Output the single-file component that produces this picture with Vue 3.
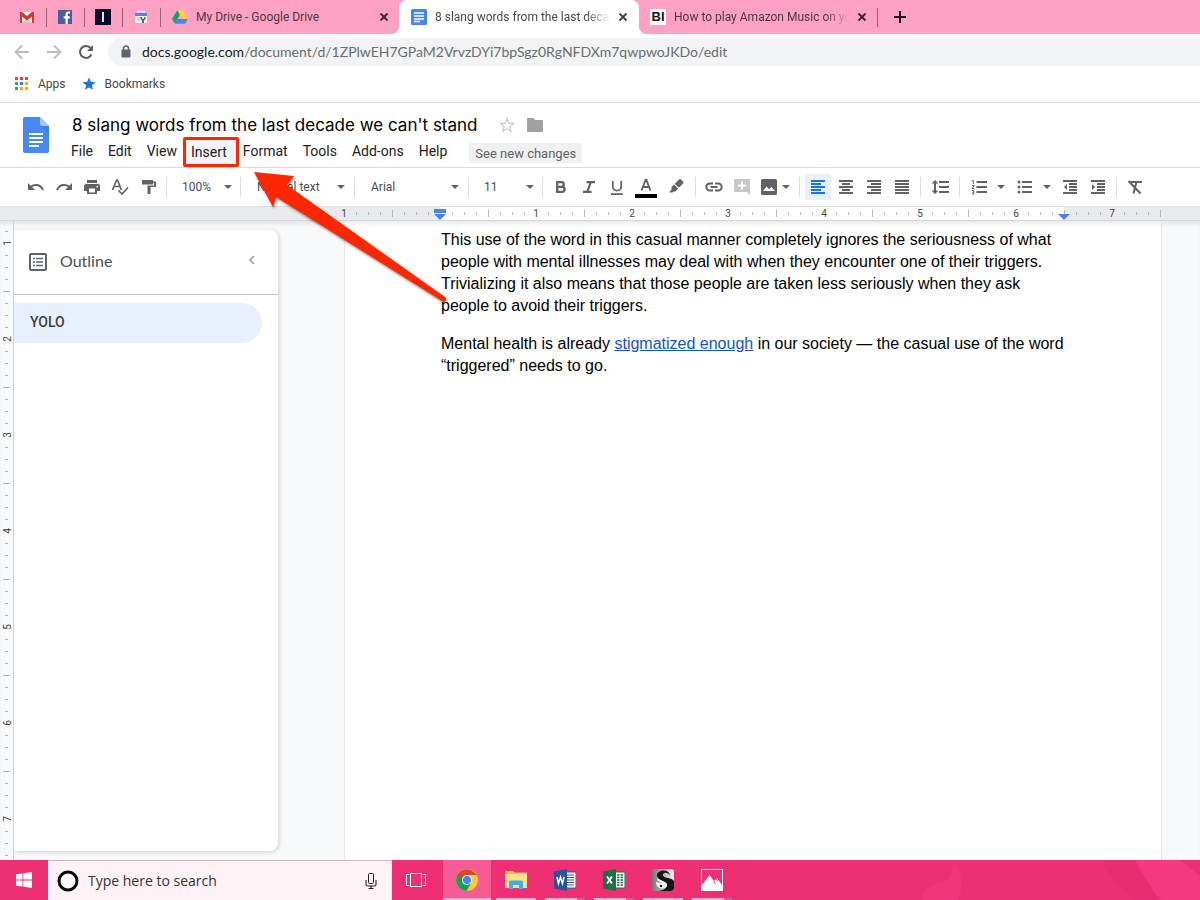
<script setup>
const outline = ['YOLO']
const menus = ['File', 'Edit', 'View', 'Insert', 'Format', 'Tools', 'Add-ons', 'Help']

const hTicks = []
for (let x = 12; x < 816; x += 12) {
  if (x === 96) continue
  if ((x - 96) % 96 === 0) hTicks.push({ x, label: (x - 96) / 96 })
  else hTicks.push({ x, tall: x % 48 === 0 })
}

const vTicks = []
for (let y = 10; y < 640; y += 12) {
  if ((y - 22) % 96 === 0) vTicks.push({ y, label: (y - 22) / 96 + 1 })
  else vTicks.push({ y, tall: (y - 22) % 48 === 0 })
}

const bars = {
  left: [14, 10, 14, 10, 14].map((w, i) => ({ x: 0, w, y: i * 3 })),
  center: [14, 8, 14, 8, 14].map((w, i) => ({ x: (14 - w) / 2, w, y: i * 3 })),
  right: [14, 10, 14, 10, 14].map((w, i) => ({ x: 14 - w, w, y: i * 3 })),
  justify: [14, 14, 14, 14, 14].map((w, i) => ({ x: 0, w, y: i * 3 })),
}
const aligns = ['left', 'center', 'right', 'justify']
</script>

<template>
  <div class="screen">
    <header class="tabs">
      <button class="pin" aria-label="Gmail">
        <svg width="16" height="16" viewBox="0 0 16 16"><path fill="#f5f0ee" d="M1 3h14v11H1z" /><path fill="#d9c9c6" d="M3 14l5-5 5 5z" /><path fill="#d8382b" d="M1 14V3.500L8 9l7-5.500V14h-2V7.500L8 11.500 3 7.500V14z" /><path fill="#d8382b" d="M1 3h2l5 4 5-4h2v2L8 10 1 5z" /></svg>
      </button>
      <button class="pin" aria-label="Facebook">
        <svg width="16" height="16" viewBox="0 0 16 16"><rect x="1" y="1" width="14" height="14" fill="#4460a0" /><path fill="#fff" d="M8.500 15V9.500H6.700V7.200h1.800V5.500c0-2 1.200-3 3-3l1.600.1v2h-1.200c-.9 0-1.100.5-1.100 1.100v1.500h2.200l-.3 2.300h-1.900V15z" /></svg>
      </button>
      <button class="pin" aria-label="Insider">
        <svg width="16" height="16" viewBox="0 0 16 16"><rect width="16" height="16" fill="#050c2b" /><rect x="7" y="3" width="2" height="10" fill="#e3e6df" /></svg>
      </button>
      <button class="pin" aria-label="Work tools">
        <svg width="16" height="16" viewBox="0 0 16 16"><path d="M5 5V2.500h6V5" fill="none" stroke="#e9eef3" stroke-width="1.500" /><rect x="2" y="4" width="12" height="10" rx="1" fill="#eef1f4" /><rect x="2" y="4" width="12" height="3" fill="#3f8fdc" /><path d="M4 9h3M4 11h3" stroke="#a9b6c2" /><path d="M7.500 8v2l1.800 1.500V14h1.600v-2.500L12.500 10V8h-1.300v1.700H9V8z" fill="#4d5560" /></svg>
      </button>
      <div class="tab drive">
        <svg width="16" height="16" viewBox="0 0 16 16"><path fill="#1aa15f" d="M5.300 1L0 10l2.700 4.700L8 5.600z" /><path fill="#ffcf48" d="M5.300 1h5.400L16 10h-5.400z" /><path fill="#4587f4" d="M5.400 10H16l-2.700 4.700H2.700z" /></svg>
        <span class="tab-title">My Drive - Google Drive</span>
        <button class="close" aria-label="Close tab"><svg width="10" height="10" viewBox="0 0 10 10"><path d="M1.500 1.500l7 7M8.500 1.500l-7 7" stroke="#332229" stroke-width="1.800" /></svg></button>
      </div>
      <div class="tab active">
        <svg width="16" height="16" viewBox="0 0 16 16"><rect width="16" height="16" rx="1.500" fill="#4486f5" /><path d="M3 4h10M3 7h10M3 10h10M3 12.500h6" stroke="#fff" stroke-width="1.500" /></svg>
        <span class="tab-title fade">8 slang words from the last decade</span>
        <button class="close" aria-label="Close tab"><svg width="10" height="10" viewBox="0 0 10 10"><path d="M1.500 1.500l7 7M8.500 1.500l-7 7" stroke="#3c4043" stroke-width="1.800" /></svg></button>
      </div>
      <div class="tab music">
        <span class="bi">BI</span>
        <span class="tab-title fade">How to play Amazon Music on your</span>
        <button class="close" aria-label="Close tab"><svg width="10" height="10" viewBox="0 0 10 10"><path d="M1.500 1.500l7 7M8.500 1.500l-7 7" stroke="#332229" stroke-width="1.800" /></svg></button>
      </div>
      <button class="newtab" aria-label="New tab"><svg width="12" height="12" viewBox="0 0 12 12"><path d="M6 0v12M0 6h12" stroke="#1d1418" stroke-width="2" /></svg></button>
    </header>

    <div class="nav">
      <button class="navbtn" aria-label="Back"><svg width="16" height="16" viewBox="0 0 16 16"><path d="M15 8H2M8 1.500L1.500 8 8 14.500" fill="none" stroke="#b9bbbd" stroke-width="1.800" /></svg></button>
      <button class="navbtn" aria-label="Forward"><svg width="16" height="16" viewBox="0 0 16 16"><path d="M1 8h13M8 1.500L14.500 8 8 14.500" fill="none" stroke="#b9bbbd" stroke-width="1.800" /></svg></button>
      <button class="navbtn" aria-label="Reload"><svg width="16" height="16" viewBox="0 0 16 16"><path d="M13.500 10.500A6 6 0 1 1 12.600 4" fill="none" stroke="#5a5d61" stroke-width="2" /><path d="M15 1v6H9z" fill="#5a5d61" /></svg></button>
      <div class="address">
        <svg width="10" height="13" viewBox="0 0 10 13"><path d="M2.500 5V3.500a2.500 2.500 0 0 1 5 0V5" fill="none" stroke="#5f6368" stroke-width="1.500" /><rect x="0.500" y="4.500" width="9" height="8" rx="1" fill="#5f6368" /></svg>
        <span class="url"><b>docs.google.com</b>/document/d/1ZPlwEH7GPaM2VrvzDYi7bpSgz0RgNFDXm7qwpwoJKDo/edit</span>
      </div>
    </div>

    <nav class="bookmarks">
      <a href="#"><svg width="14" height="14" viewBox="0 0 14 14"><path fill="#ea4335" d="M0 0h3v3H0zM5 0h3v3H5zM10 0h3v3h-3z" /><path fill="#34a853" d="M0 5h3v3H0zM0 10h3v3H0z" /><path fill="#1a8cf0" d="M5 5h3v3H5z" /><path fill="#fbab05" d="M10 5h3v3h-3zM5 10h3v3H5zM10 10h3v3h-3z" /></svg><span>Apps</span></a>
      <a href="#"><svg width="14" height="14" viewBox="0 0 14 14"><path fill="#1a73e8" d="M7 .5l1.800 4.300 4.700.4-3.600 3 1.100 4.600L7 10.400l-4 2.400 1.100-4.600-3.600-3 4.700-.4z" /></svg><span>Bookmarks</span></a>
    </nav>

    <div class="dochead">
      <svg class="doclogo" width="26" height="36" viewBox="0 0 26 36"><path fill="#4688f4" d="M2 0h15l9 9v25a2 2 0 0 1-2 2H2a2 2 0 0 1-2-2V2a2 2 0 0 1 2-2z" /><path fill="#3a74dc" d="M18 9h8v8z" opacity=".6" /><path fill="#a6c5fa" d="M17 0l9 9h-7a2 2 0 0 1-2-2z" /><path d="M6 17h14M6 21h14M6 25h14M6 29h10" stroke="#fff" stroke-width="2" /></svg>
      <div class="headcol">
        <div class="titlerow">
          <h1>8 slang words from the last decade we can't stand</h1>
          <button aria-label="Star"><svg width="16" height="16" viewBox="0 0 16 16"><path fill="none" stroke="#c6c7c9" stroke-width="1.100" d="M8 1.500l1.800 4.600 4.800.3-3.700 3.100 1.200 4.800L8 11.600l-4.100 2.700 1.200-4.800L1.400 6.400l4.800-.3z" /></svg></button>
          <button aria-label="Move"><svg width="16" height="14" viewBox="0 0 16 14"><path fill="#9fa1a4" d="M1 0h5.500l2 2H15a1 1 0 0 1 1 1v10a1 1 0 0 1-1 1H1a1 1 0 0 1-1-1V1a1 1 0 0 1 1-1z" /></svg></button>
        </div>
        <div class="menus">
          <button v-for="m in menus" :key="m" :class="{ marked: m === 'Insert' }">{{ m }}</button>
          <button class="changes">See new changes</button>
        </div>
      </div>
    </div>

    <div class="tools">
      <button class="t" aria-label="Undo"><svg width="18" height="18" viewBox="0 0 18 18"><path d="M3 9.500C6.500 5.500 13.500 6 16 12" fill="none" stroke="#5f6368" stroke-width="2" /><path d="M1 5v7h7z" fill="#5f6368" /></svg></button>
      <button class="t" aria-label="Redo"><svg width="18" height="18" viewBox="0 0 18 18"><path d="M15 9.500C11.500 5.500 4.500 6 2 12" fill="none" stroke="#5f6368" stroke-width="2" /><path d="M17 5v7h-7z" fill="#5f6368" /></svg></button>
      <button class="t" aria-label="Print"><svg width="18" height="18" viewBox="0 0 18 18"><path fill="#5f6368" fill-rule="evenodd" d="M4 2h10v3H4zM3 6h12a2 2 0 0 1 2 2v5h-3v3H4v-3H1V8a2 2 0 0 1 2-2zM6 10.500v4h6v-4zM13.500 8v1.500H15V8z" /></svg></button>
      <button class="t" aria-label="Spelling"><svg width="18" height="18" viewBox="0 0 18 18"><path d="M1.500 12L5.600 2h.8l4 10M3 8.500h6" fill="none" stroke="#5f6368" stroke-width="1.700" /><path d="M7.500 12.500l3.500 3.500 6-6.500" fill="none" stroke="#5f6368" stroke-width="1.700" /></svg></button>
      <button class="t" aria-label="Paint format"><svg width="18" height="18" viewBox="0 0 18 18"><path fill="#5f6368" d="M3 2h11v1.500h3V9h-5.500v7h-3V7.500H15V5h-1v1.500H3z" /></svg></button>
      <i class="sep" />
      <label class="drop narrow"><select aria-label="Zoom"><option>100%</option></select><svg width="8" height="4"><path d="M0 0h8l-4 4z" fill="#5f6368" /></svg></label>
      <i class="bar" />
      <label class="drop"><select aria-label="Style"><option>Normal text</option></select><svg width="8" height="4"><path d="M0 0h8l-4 4z" fill="#5f6368" /></svg></label>
      <i class="bar" />
      <label class="drop"><select aria-label="Font"><option>Arial</option></select><svg width="8" height="4"><path d="M0 0h8l-4 4z" fill="#5f6368" /></svg></label>
      <i class="bar" />
      <label class="drop narrow"><select aria-label="Font size"><option>11</option></select><svg width="8" height="4"><path d="M0 0h8l-4 4z" fill="#5f6368" /></svg></label>
      <i class="sep first" />
      <button class="t" aria-label="Bold"><svg width="18" height="18" viewBox="0 0 18 18"><path d="M5.200 4.200h4.300a2.300 2.300 0 0 1 0 4.600H5.200zM5.200 8.800h4.900a2.500 2.500 0 0 1 0 5H5.200z" fill="none" stroke="#5f6368" stroke-width="2.300" /></svg></button>
      <button class="t" aria-label="Italic"><svg width="18" height="18" viewBox="0 0 18 18"><path d="M6.500 4.200H15M3 13.800h8.500M10.800 4L7.200 14" fill="none" stroke="#5f6368" stroke-width="2.200" /></svg></button>
      <button class="t" aria-label="Underline"><svg width="18" height="18" viewBox="0 0 18 18"><path d="M4.800 3v5.500a4.200 4.200 0 0 0 8.400 0V3M3 16.200h12" fill="none" stroke="#5f6368" stroke-width="1.800" /></svg></button>
      <button class="t wide" aria-label="Text color"><svg width="22" height="22" viewBox="0 0 22 22"><path d="M6.500 14.500L10.600 4h.8l4.100 10.500M8 11h6" fill="none" stroke="#5f6368" stroke-width="1.900" /><path fill="#000" d="M0 18h22v4H0z" /></svg></button>
      <button class="t wide" aria-label="Highlight"><svg width="18" height="18" viewBox="0 0 18 18"><path fill="#5f6368" d="M12 1.500a1.500 1.500 0 0 1 2.100 0l1.900 1.900a1.500 1.500 0 0 1 0 2.100l-4.200 4.200-4-4zM7 6.500l4.200 4.200-2.700 2.700H6.500L5.500 14.500H2l2.500-2.800V9z" /></svg></button>
      <i class="sep" />
      <button class="t" aria-label="Link"><svg width="20" height="18" viewBox="0 0 20 18"><path d="M9 5.500H5.800a3.500 3.500 0 0 0 0 7H9M11 5.500h3.200a3.500 3.500 0 0 1 0 7H11M6.500 9h7" fill="none" stroke="#5f6368" stroke-width="2" /></svg></button>
      <button class="t" aria-label="Comment"><svg width="18" height="18" viewBox="0 0 18 18"><path fill="#c6c7c9" d="M2 1h14a1 1 0 0 1 1 1v15l-3-3H2a1 1 0 0 1-1-1V2a1 1 0 0 1 1-1z" /><path d="M9 3.500v8M5 7.500h8" stroke="#fff" stroke-width="2" /></svg></button>
      <button class="t pair image" aria-label="Image"><svg width="16" height="16" viewBox="0 0 16 16"><rect width="16" height="16" rx="1.500" fill="#5f6368" /><path fill="#fff" d="M2 12l3.500-4.500L8 10.300l2.500-2.300 3.500 4z" /></svg><svg width="8" height="4"><path d="M0 0h8l-4 4z" fill="#5f6368" /></svg></button>
      <i class="sep" />
      <button v-for="a in aligns" :key="a" class="t align" :class="{ on: a === 'left' }" :aria-label="'Align ' + a"><svg width="14" height="14" viewBox="0 0 14 14"><rect v-for="b in bars[a]" :key="b.y" :x="b.x" :y="b.y" :width="b.w" height="2" :fill="a === 'left' ? '#1a73e8' : '#5f6368'" /></svg></button>
      <i class="sep" />
      <button class="t wide" aria-label="Line spacing"><svg width="18" height="18" viewBox="0 0 18 18"><path fill="#5f6368" d="M4 2l3.500 3.500H5v7h2.500L4 16 .5 12.500H3v-7H.5zM8 3h10v2H8zM8 8h10v2H8zM8 13h10v2H8z" /></svg></button>
      <i class="sep" />
      <button class="t pair" aria-label="Numbered list"><svg width="16" height="16" viewBox="0 0 16 16"><path fill="#5f6368" d="M5.500 2H16v2H5.500zM5.500 7H16v2H5.500zM5.500 12H16v2H5.500z" /><path d="M1 1.500h1.300V5M.8 6.500h2.400L1 9.500h2.400M.8 11.500h2v3.500h-2M1.500 13.200h1.300" fill="none" stroke="#5f6368" stroke-width="1" /></svg><svg width="8" height="4"><path d="M0 0h8l-4 4z" fill="#5f6368" /></svg></button>
      <button class="t pair" aria-label="Bulleted list"><svg width="16" height="16" viewBox="0 0 16 16"><path fill="#5f6368" d="M5 2h10v2H5zM5 7h10v2H5zM5 12h10v2H5z" /><circle cx="2" cy="3" r="1.500" fill="#5f6368" /><circle cx="2" cy="8" r="1.500" fill="#5f6368" /><circle cx="2" cy="13" r="1.500" fill="#5f6368" /></svg><svg width="8" height="4"><path d="M0 0h8l-4 4z" fill="#5f6368" /></svg></button>
      <button class="t" aria-label="Decrease indent"><svg width="14" height="14" viewBox="0 0 14 14"><path fill="#5f6368" d="M0 0h14v2H0zM6 3h8v2H6zM6 6h8v2H6zM6 9h8v2H6zM0 12h14v2H0zM4 4v6L1 7z" /></svg></button>
      <button class="t" aria-label="Increase indent"><svg width="14" height="14" viewBox="0 0 14 14"><path fill="#5f6368" d="M0 0h14v2H0zM6 3h8v2H6zM6 6h8v2H6zM6 9h8v2H6zM0 12h14v2H0zM1 4v6l3-3z" /></svg></button>
      <i class="sep" />
      <button class="t" aria-label="Clear formatting"><svg width="18" height="18" viewBox="0 0 18 18"><path d="M4.500 4H16M10.500 4L7.500 15.500M2.500 3l12 12.500" fill="none" stroke="#5f6368" stroke-width="2" /></svg></button>
    </div>

    <div class="hruler">
      <svg width="818" height="13" viewBox="0 0 818 13">
        <rect x="96" width="624" height="13" fill="#fff" />
        <text x="0" y="10" text-anchor="middle">1</text>
        <template v-for="t in hTicks" :key="t.x">
          <text v-if="t.label" :x="t.x" y="10" text-anchor="middle">{{ t.label }}</text>
          <rect v-else :x="t.x" :y="t.tall ? 3 : 5" width="1" :height="t.tall ? 7 : 3" fill="#b4b6b9" />
        </template>
        <rect x="816" y="3" width="1" height="7" fill="#b4b6b9" />
        <path d="M90 2h12v4H90zM90 7h12l-6 6z" fill="#4285f4" />
        <path d="M714 7h12l-6 6z" fill="#4285f4" />
      </svg>
    </div>

    <div class="work">
      <div class="vruler">
        <svg width="13" height="639" viewBox="0 0 13 639">
          <template v-for="t in vTicks" :key="t.y">
            <text v-if="t.label" :transform="`rotate(-90 11 ${t.y})`" x="11" :y="t.y" text-anchor="middle">{{ t.label }}</text>
            <rect v-else :x="t.tall ? 3 : 5" :y="t.y" :width="t.tall ? 7 : 3" height="1" fill="#b4b6b9" />
          </template>
        </svg>
      </div>
      <aside class="outline">
        <div class="ohead">
          <svg width="18" height="18" viewBox="0 0 18 18"><rect x="1" y="1" width="16" height="16" rx="1" fill="none" stroke="#5f6368" stroke-width="2" /><path d="M7 5.500h7M7 9h7M7 12.500h7M4 5.500h2M4 9h2M4 12.500h2" stroke="#5f6368" stroke-width="1.500" /></svg>
          <h2>Outline</h2>
          <button aria-label="Close outline"><svg width="8" height="10" viewBox="0 0 8 10"><path d="M6 1L2 5l4 4" fill="none" stroke="#9fa1a4" stroke-width="1.700" /></svg></button>
        </div>
        <a v-for="o in outline" :key="o" href="#" class="oitem">{{ o }}</a>
      </aside>
      <main class="canvas">
        <article class="page">
          <p>This use of the word in this casual manner completely ignores the seriousness of what<br>people with mental illnesses may deal with when they encounter one of their triggers.<br>Trivializing it also means that those people are taken less seriously when they ask<br>people to avoid their triggers.</p>
          <p>Mental health is already <a href="#">stigmatized enough</a> in our society — the casual use of the word<br>“triggered” needs to go.</p>
        </article>
      </main>
    </div>

    <footer class="taskbar">
      <button class="start" aria-label="Start"><svg width="16" height="16" viewBox="0 0 16 16"><path fill="#fff" d="M0 2.300L6.500 1.400v6.200H0zM7.300 1.300L16 0v7.600H7.300zM0 8.400h6.500v6.200L0 13.700zM7.300 8.400H16V16l-8.700-1.300z" /></svg></button>
      <label class="search">
        <svg width="22" height="22" viewBox="0 0 22 22"><circle cx="11" cy="11" r="9" fill="#fff" stroke="#080808" stroke-width="3" /></svg>
        <input type="text" placeholder="Type here to search" aria-label="Type here to search">
        <svg width="12" height="16" viewBox="0 0 12 16"><rect x="3.500" y="0.500" width="5" height="10" rx="1" fill="none" stroke="#222" /><path d="M1 7v4.500a1.500 1.500 0 0 0 1.500 1.500h7a1.500 1.500 0 0 0 1.500-1.500V7M6 13v2.500M3.500 15.500h5" fill="none" stroke="#222" stroke-width="1.100" /></svg>
      </label>
      <button class="app view" aria-label="Task view"><svg width="20" height="14" viewBox="0 0 20 14"><rect x="4.500" y="0.500" width="11" height="13" fill="none" stroke="#fff" /><path d="M3 1.500H.5v11H3M17 1.500h2.500v11H17" fill="none" stroke="#fff" /></svg></button>
      <button class="app current" aria-label="Chrome"><svg width="22" height="22" viewBox="0 0 22 22"><circle cx="11" cy="11" r="11" fill="#fbc934" /><path fill="#1b9e58" d="M1.500 5.500A11 11 0 0 0 10.500 22l5-8.500L11 11z" /><path fill="#d9472f" d="M1.500 5.500A11 11 0 0 1 20.500 6H11L6.500 13.500z" /><path fill="#1b9e58" d="M1.500 5.500l5 8.500 3-1z" /><circle cx="11" cy="11" r="5" fill="#fff" /><circle cx="11" cy="11" r="4" fill="#4285f4" /></svg></button>
      <button class="app run" aria-label="File Explorer"><svg width="22" height="18" viewBox="0 0 22 18"><path fill="#f0c04a" d="M0 0h8l1.500 1.500H22V4H0z" /><path fill="#fbe08c" d="M0 3h22v14H0z" /><path fill="#36b2e6" d="M4 18v-7a1.500 1.500 0 0 1 1.500-1.500h11A1.500 1.500 0 0 1 18 11v7h-4v-4H8v4z" /></svg></button>
      <button class="app run many" aria-label="Word"><svg width="22" height="22" viewBox="0 0 22 22"><rect x="12" y="3" width="10" height="16" fill="#fff" stroke="#2a5699" /><path d="M13 6h7M13 8.500h7M13 11h7M13 13.500h7M13 16h7" stroke="#2a5699" /><path fill="#2a5699" d="M0 2.500L13 0v22L0 19.500z" /><path d="M3 8l1.500 6.500L6.500 8l2 6.500L10 8" fill="none" stroke="#fff" stroke-width="1.500" /></svg></button>
      <button class="app run many" aria-label="Excel"><svg width="22" height="22" viewBox="0 0 22 22"><rect x="12" y="3" width="10" height="16" fill="#fff" stroke="#1e7145" /><path d="M14 6h2.500M14 8.500h2.500M14 11h2.500M14 13.500h2.500M14 16h2.500M17.500 6H20M17.500 8.500H20M17.500 11H20M17.500 13.500H20M17.500 16H20" stroke="#1e7145" stroke-width="1.400" /><path fill="#1e7145" d="M0 2.500L13 0v22L0 19.500z" /><path d="M4 7.500l5 7M9 7.500l-5 7" stroke="#fff" stroke-width="1.900" /></svg></button>
      <button class="app run" aria-label="Scrivener"><svg width="22" height="22" viewBox="0 0 22 22"><defs><linearGradient id="silver" x1="0" y1="0" x2="1" y2="0"><stop offset="0" stop-color="#777" /><stop offset="1" stop-color="#f2f2f2" /></linearGradient></defs><rect width="22" height="22" rx="3" fill="url(#silver)" /><path fill="#161616" d="M22 12v7a3 3 0 0 1-3 3H7c5-1 8-3 8-6 0-4.500-10-4-10-9.500C5 3 8.500 1.500 12 1.500c3 0 5.500 1.500 6 5-1.500-2.300-3.500-3-5.500-2.500-2.200.6-2.200 2.700-.5 3.800C14.500 9.500 20 9 22 12z" /><path fill="#f2f2f2" d="M4 13c0 4 2.500 6.500 6 6.500 3 0 5-1.500 5-4 0-3.500-8-3.500-9.500-7C4.500 13 8 12 10 14c-2.500-.5-4.500 0-6-1z" /><circle cx="9" cy="17" r="1.200" fill="#111" /></svg></button>
      <button class="app run many" aria-label="Photos"><svg width="22" height="22" viewBox="0 0 22 22"><rect x="0.500" y="0.500" width="21" height="21" fill="none" stroke="#fff" /><path fill="#fff" d="M1 16l7.500-10L13 12l3-3 5 7v5H1z" /><path d="M12.500 12l2 2.500M15 9.500l2 3" stroke="#ee2f74" /></svg></button>
      <svg class="waves" viewBox="0 0 460 40" preserveAspectRatio="none"><path d="M180 40q0-14 18-18 14-2 12-20 16 12 6 38z" fill="#ff4585" opacity=".25" /><path d="M360 0q10 22 36 40h30L400 0z" fill="#dc2168" opacity=".2" /><path d="M395 0q10 22 25 40h40V16L440 0z" fill="#ff3f85" opacity=".6" /></svg>
    </footer>

    <svg class="arrow" width="210" height="150" viewBox="0 0 210 150"><path d="M14 12L54 16 47 25 205 137a2 2 0 0 1-3 4L36 37 33 47z" fill="#ff2600" /></svg>
  </div>
</template>

<style>
body { background: #fff; }
html, body { overflow: hidden; }
</style>

<style scoped>
* { box-sizing: border-box; }
.screen { position: relative; display: flex; flex-direction: column; height: 100vh; min-height: 600px; font-family: Roboto, "Liberation Sans", sans-serif; color: #202124; overflow: hidden; background: #fff; }
button { border: 0; background: none; padding: 0; margin: 0; font: inherit; color: inherit; }
svg { display: block; flex: none; }
a { color: inherit; text-decoration: none; }

.tabs { display: flex; height: 34px; background: #ffa1c3; padding-left: 8px; font: 12px Roboto, sans-serif; flex: none; }
.pin { width: 38px; display: flex; justify-content: center; align-items: center; position: relative; }
.pin::after, .music::after { content: ""; position: absolute; right: -1px; top: 8px; width: 1px; height: 19px; background: #8f6475; }
.tab { display: flex; align-items: center; position: relative; }
.tab-title { flex: 1; margin-left: 8px; white-space: nowrap; overflow: hidden; color: #4a3a42; }
.fade { -webkit-mask-image: linear-gradient(90deg, #000 calc(100% - 24px), transparent); mask-image: linear-gradient(90deg, #000 calc(100% - 24px), transparent); }
.close { width: 10px; height: 10px; margin-left: 8px; }
.drive { width: 239px; padding: 0 10px 0 12px; }
.active { width: 240px; background: #fff; border-radius: 8px 8px 0 0; padding: 0 11px 0 12px; }
.active .tab-title { color: #45494d; }
.active::before, .active::after { content: ""; position: absolute; bottom: 0; width: 8px; height: 8px; }
.active::before { left: -8px; background: radial-gradient(circle at 0 0, #ffa1c3 8px, #fff 8px); }
.active::after { right: -8px; background: radial-gradient(circle at 100% 0, #ffa1c3 8px, #fff 8px); }
.music { width: 238px; padding: 0 10px 0 11px; }
.bi { width: 16px; height: 16px; background: #fff; color: #111; font: bold 13px/16px "Liberation Sans", sans-serif; text-align: center; }
.newtab { width: 46px; display: flex; align-items: center; justify-content: center; }

.nav { display: flex; align-items: center; height: 35px; padding-left: 8px; flex: none; }
.navbtn { width: 28px; height: 28px; margin-right: 4px; display: flex; align-items: center; justify-content: center; }
.address { flex: 1; margin-left: 4px; height: 28px; background: #f1f3f4; border-radius: 14px 0 0 14px; display: flex; align-items: center; padding-left: 13px; }
.url { margin-left: 11px; font: 14px Lato, sans-serif; color: #696d71; white-space: nowrap; }
.url b { font-weight: 400; color: #202124; }
.bookmarks { display: flex; gap: 16px; height: 34px; padding: 0 0 4px 15px; align-items: center; border-bottom: 1px solid #dadce0; font: 12px Roboto, sans-serif; color: #46494d; flex: none; }
.bookmarks a { display: flex; align-items: center; gap: 9px; }

.dochead { display: flex; height: 65px; padding-left: 23px; border-bottom: 1px solid #dadce0; flex: none; }
.doclogo { margin-top: 14px; }
.headcol { margin-left: 15px; flex: 1; }
.titlerow { display: flex; align-items: center; height: 24px; margin: 10px 0 0 8px; }
h1 { margin: 0 21px 0 0; font: 17px/24px Inter, sans-serif; color: #000; white-space: nowrap; }
.titlerow button { margin-right: 12px; }
.menus { display: flex; gap: 1px; height: 28px; align-items: center; font-size: 14px; }
.menus button { height: 26px; padding: 0 7px; white-space: nowrap; }
.menus .marked { height: 30px; margin: 1px -4px 0 -2px; padding: 0 9px 0 5px; background: #f1f3f4; border: 3px solid #ff2600; border-radius: 2px; }
.menus .changes { height: 20px; margin: 4px 0 0 14px; padding: 0 6px; background: #f0f0f0; color: #5f6368; font-size: 13px; border-radius: 2px; }

.tools { display: flex; align-items: center; height: 39px; padding-left: 22px; border-bottom: 1px solid #dadce0; flex: none; }
.t { width: 28px; height: 26px; display: flex; align-items: center; justify-content: center; flex: none; }
.t.wide { width: 30px; }
.t.pair { width: 46px; justify-content: flex-start; padding-left: 7px; gap: 10px; }
.t.image { width: 39px; padding-left: 5px; gap: 5px; }
.t.align { width: 26px; margin: 0 1px; border-radius: 2px; }
.t.on { background: #e8f0fe; }
.sep, .bar { width: 1px; height: 20px; background: #dadce0; margin: 0 4px; flex: none; }
.bar { margin: 0; }
.sep:nth-of-type(1) { margin-right: 0; }
.sep.first { margin-left: 0; }
.drop { display: flex; align-items: center; justify-content: space-between; width: 113px; padding: 0 9px 0 16px; flex: none; }
.drop.narrow { width: 73px; padding-right: 8px; padding-left: 15px; }
.drop select { appearance: none; border: 0; padding: 0; background: none; font: 12px Roboto, sans-serif; color: #4a4d51; min-width: 0; flex: 1; }

.hruler { height: 14px; flex: none; display: flex; justify-content: center; padding-left: 306px; background: #e8eaed; border-bottom: 1px solid #d5d7da; }
.hruler svg { overflow: visible; }
text { font: 10px Roboto, sans-serif; fill: #444; }
.work { flex: 1; min-height: 0; display: flex; background: #f8f9fa; box-shadow: inset 0 5px 5px -3px #dddfe1; overflow: hidden; }
.vruler { width: 14px; border-right: 1px solid #d0d2d5; flex: none; overflow: hidden; }
.outline { width: 264px; margin: 9px 28px 9px 0; background: #fff; border-radius: 0 8px 8px 0; box-shadow: 1px 1px 4px rgba(60, 64, 67, .22); flex: none; clip-path: inset(-6px -6px -6px 0); }
.ohead { display: flex; align-items: center; height: 65px; padding: 0 22px 0 15px; border-bottom: 1px solid #c9cbcd; }
h2 { margin: 0 auto 0 13px; padding-bottom: 2px; font: 16px/20px Lato, sans-serif; color: #4b4e52; }
.ohead button { margin-bottom: 4px; }
.oitem { display: block; height: 40px; margin: 8px 16px 0 0; padding-left: 16px; border-radius: 0 20px 20px 0; background: #e8f0fe; font: 500 14px/38px Roboto, sans-serif; color: #3c4043; }
.canvas { flex: 1; display: flex; justify-content: center; min-width: 0; }
.page { width: 818px; padding: 8px 80px 0 96px; background: #fff; border: 1px solid #e6e7e9; border-width: 0 1px; flex: none; font: 16px/22px "Liberation Sans", Arial, sans-serif; color: #000; box-shadow: inset 0 5px 5px -3px #e4e5e7; }
.page p { margin: 0 0 16px; white-space: nowrap; }
.page a { color: #1155cc; text-decoration: underline; }

.taskbar { position: relative; display: flex; height: 40px; background: #ee2f74; flex: none; }
.start { width: 48px; display: flex; align-items: center; justify-content: center; }
.search { width: 344px; display: flex; align-items: center; background: #fef2f6; border-top: 1px solid #c3b9bd; padding: 0 15px 0 9px; }
.search input { flex: 1; min-width: 0; border: 0; background: none; padding: 0; margin-left: 9px; font: 14px "Open Sans", sans-serif; }
.search input::placeholder { color: #333; opacity: 1; }
.app { position: relative; width: 48px; margin-right: 1px; display: flex; align-items: center; justify-content: center; z-index: 1; }
.view { margin-right: 3px; }
.current { background: #f55c94; }
.current::after, .run::after { content: ""; position: absolute; bottom: 0; left: 4px; right: 4px; height: 2px; background: #ffb3d1; }
.current::after { left: 0; right: 0; }
.many::after { background: linear-gradient(90deg, #ffb3d1 32px, #b86a8e 32px); }
.waves { position: absolute; right: 0; top: 0; width: 38%; height: 40px; }
.arrow { position: absolute; left: 240px; top: 160px; filter: drop-shadow(1px 2px 1px rgba(0, 0, 0, .4)); pointer-events: none; }
</style>
